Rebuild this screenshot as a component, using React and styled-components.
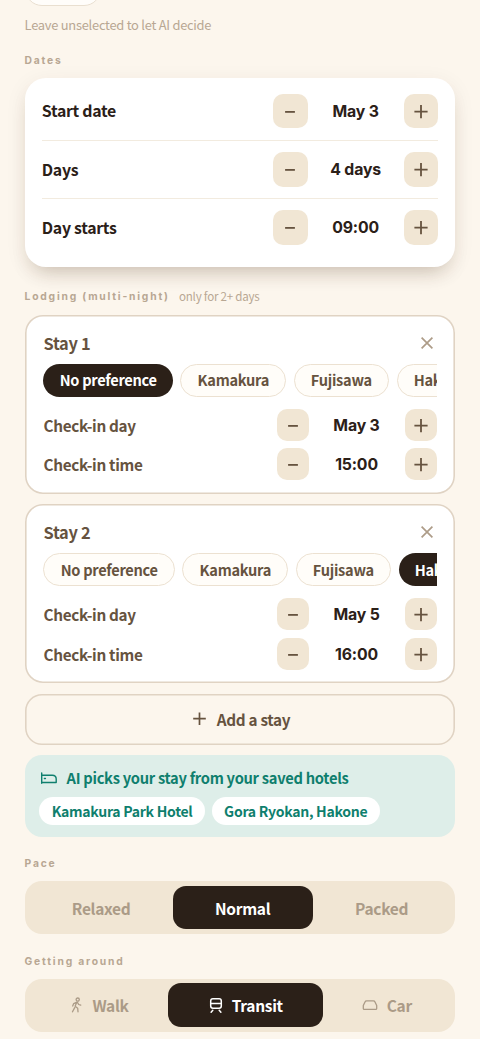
import React from "react";
import styled, { createGlobalStyle, css } from "styled-components";

const ink = "#2b2018";
const brown = "#66533f";
const sand = "#f1e6d4";
const muted = "#b8a793";
const teal = "#0f7f6e";

const sans = `"Noto Sans CJK JP", "Noto Sans", sans-serif`;
const grotesk = `Inter, "Liberation Sans", sans-serif`;
const tight = "-0.02em";

const GlobalStyle = createGlobalStyle`
  * { box-sizing: border-box; }
  body { margin: 0; background: #fcf6ed; font-family: ${sans}; color: ${ink}; }
  button { font: inherit; color: inherit; border: 0; padding: 0; margin: 0; background: none; }
`;

const Screen = styled.main`
  width: 480px;
  height: 1039px;
  overflow: hidden;
  padding: 0 24.6px;
  display: flex;
  flex-direction: column;
  & > * { flex-shrink: 0; }
`;

const CutChip = styled.div`
  width: 74px;
  height: 6px;
  overflow: hidden;
  display: flex;
  align-items: flex-end;
  &::after {
    content: "";
    flex: none;
    width: 74px;
    height: 34px;
    border: 1.5px solid #e9dfd0;
    border-radius: 17px;
    background: #fffdfa;
  }
`;

const Hint = styled.p`
  margin: 9px 0 0;
  height: 21px;
  line-height: 20px;
  font-size: 12.9px;
  letter-spacing: -0.02em;
  color: ${muted};
`;

const Label = styled.h2`
  margin: ${(p) => p.$top}px 0 0;
  height: 16px;
  line-height: 16px;
  padding-top: 0.8px;
  font-family: ${grotesk};
  font-size: 10.3px;
  font-weight: 700;
  letter-spacing: 1.8px;
  color: ${muted};
  display: flex;
  align-items: center;
`;

const LabelNote = styled.span`
  margin-left: 9.4px;
  font-family: ${sans};
  font-size: 11.6px;
  line-height: 14px;
  margin-bottom: 1px;
  font-weight: 400;
  letter-spacing: -0.022em;
`;

const DatesCard = styled.section`
  margin-top: 10px;
  height: 189.4px;
  padding: 4.3px 17.2px 0;
  border-radius: 21px;
  background: #fff;
  box-shadow: 0 12px 20px -9px rgba(70, 45, 20, 0.25), 0 5px 22px rgba(70, 45, 20, 0.07);
`;

const DateRow = styled.div`
  height: 57.8px;
  display: flex;
  align-items: center;
  justify-content: space-between;
  font-size: 15.9px;
  line-height: 23.4px;
  font-weight: 700;
  letter-spacing: ${tight};
  & + & { border-top: 1.5px solid #f2ebdf; }
`;

const Stepper = styled.div`
  display: flex;
  align-items: center;
`;

const StepButton = styled.button`
  width: ${(p) => p.$size}px;
  height: ${(p) => p.$size}px;
  border-radius: 10px;
  background: ${sand};
  color: ${brown};
  display: grid;
  place-items: center;
`;

const StepValue = styled.span`
  width: 96px;
  text-align: center;
  font-family: ${grotesk};
  font-size: 15.8px;
  line-height: 20px;
  padding-top: 2px;
  font-weight: 700;
  letter-spacing: -0.15px;
  color: ${ink};
`;

const StayCard = styled.section`
  margin-top: ${(p) => p.$top}px;
  height: 179px;
  padding: 14.7px 18.9px 0;
  box-shadow: inset 0 0 0 1.6px #e0d3c3;
  border-radius: 18px;
  background: #fff;
`;

const StayHead = styled.div`
  height: 26px;
  display: flex;
  align-items: center;
  justify-content: space-between;
  font-size: 16.4px;
  line-height: 24px;
  font-weight: 700;
  letter-spacing: ${tight};
  color: ${brown};
  svg { margin-right: 3.4px; color: #ad9c88; }
`;

const ChipStrip = styled.div`
  margin-top: 8px;
  margin-bottom: 12px;
  display: flex;
  gap: 7.5px;
  overflow: hidden;
`;

const Chip = styled.button`
  flex: none;
  height: 33px;
  padding: 0 16.2px;
  border-radius: 17px;
  font-size: 14.6px;
  line-height: 20px;
  font-weight: 700;
  letter-spacing: ${tight};
  white-space: nowrap;
  ${(p) =>
    p.$on
      ? css`background: ${ink}; color: #fff;`
      : css`background: #fffdf9; color: ${brown}; border: 1.5px solid #ece1d1;`}
`;

const StayRow = styled.div`
  height: 32px;
  margin-bottom: 7.4px;
  display: flex;
  align-items: center;
  justify-content: space-between;
  font-size: 15.3px;
  line-height: 22px;
  font-weight: 700;
  letter-spacing: ${tight};
  color: ${brown};
`;

const AddButton = styled.button`
  margin-top: 10.5px;
  height: 51px;
  box-shadow: inset 0 0 0 1.6px #e0d3c3;
  border-radius: 17px;
  display: flex;
  align-items: center;
  justify-content: center;
  gap: 11px;
  padding: 0 0 0 3px;
  font-size: 15.3px;
  line-height: 22px;
  font-weight: 700;
  letter-spacing: ${tight};
  color: ${brown};
`;

const Picks = styled.section`
  margin-top: 10px;
  height: 82px;
  padding: 12px 14.8px 0;
  border-radius: 17px;
  background: #deeee9;
  color: ${teal};
  font-weight: 700;
  letter-spacing: -0.018em;
`;

const PicksHead = styled.div`
  height: 22px;
  display: flex;
  align-items: center;
  gap: 8.6px;
  padding-left: 0.6px;
  font-size: 14.7px;
  line-height: 20px;
`;

const PicksList = styled.div`
  margin-top: 8px;
  display: flex;
  gap: 7px;
`;

const Hotel = styled.span`
  height: 28px;
  line-height: 28px;
  padding: 0 12.3px;
  border-radius: 14px;
  background: #fff;
  font-size: 14.05px;
`;

const Segments = styled.div`
  margin-top: 10px;
  height: 53.3px;
  padding: 4.9px;
  border-radius: 17px;
  background: ${sand};
  display: grid;
  grid-template-columns: ${(p) => p.$columns};
`;

const Segment = styled.button`
  border-radius: 13px;
  display: flex;
  align-items: center;
  justify-content: center;
  gap: 9px;
  font-size: 15.5px;
  line-height: 22px;
  font-weight: 700;
  letter-spacing: ${tight};
  color: ${(p) => (p.$on ? "#fff" : "#ab9b87")};
  background: ${(p) => (p.$on ? ink : "transparent")};
`;

const Icon = ({ w = 16, h = 16, sw = 1.5, children }) => (
  <svg
    width={w}
    height={h}
    viewBox={`0 0 ${w} ${h}`}
    fill="none"
    stroke="currentColor"
    strokeWidth={sw}
    strokeLinecap="round"
    strokeLinejoin="round"
  >
    {children}
  </svg>
);

const Minus = () => (
  <Icon sw={1.8}><path d="M3.1 8.9h9.8" strokeLinecap="butt" /></Icon>
);
const Plus = () => (
  <Icon sw={1.8}><path d="M8 2.1v13.2M1.4 8.7h13.2" strokeLinecap="butt" /></Icon>
);
const PlusSmall = () => (
  <Icon w={13} h={14} sw={1.7}><path d="M6.5 .4v12.6M.2 6.7h12.6" strokeLinecap="butt" /></Icon>
);
const Close = () => (
  <Icon w={12} h={12} sw={1.7}><path d="M.6 .6l10.8 10.8M11.4 .6L.6 11.4" strokeLinecap="butt" /></Icon>
);
const Bed = () => (
  <Icon w={18} h={14} sw={1.4}>
    <path d="M1.7 2v10.3M1.7 4.3h10.6c2.4 0 3.9 1.6 3.9 3.8v3.4H1.7" />
    <path d="M4.4 7.5h1" />
  </Icon>
);
const Walker = () => (
  <Icon w={14} h={16} sw={1.3}>
    <circle cx="8.7" cy="2.6" r="1.6" />
    <path d="M7.9 5.1L6.1 9.3l2.6 1.9.3 3.6M5.7 10.6l-2.2 4.2M7.9 5.1L4.7 6.6 3.7 9M8.4 5.3l1.3 2.2 2 .7" />
  </Icon>
);
const Train = () => (
  <Icon w={14} h={17} sw={1.5}>
    <rect x="1.7" y="1.7" width="10.6" height="9.6" rx="2.2" />
    <path d="M1.7 6.4h10.6M3.8 13.2l-1.7 2M10.2 13.2l1.7 2" />
  </Icon>
);
const Car = () => (
  <Icon w={16} h={12} sw={1.3}>
    <path d="M1.3 9.4V6.6L3 2.9Q3.5 1.8 4.6 1.8h6.8q1.1 0 1.6 1.1l1.7 3.7v2.8q0 1-1 1H2.3q-1 0-1-1z" />
  </Icon>
);

const Step = ({ size, value }) => (
  <Stepper>
    <StepButton $size={size} aria-label="Decrease"><Minus /></StepButton>
    <StepValue>{value}</StepValue>
    <StepButton $size={size} aria-label="Increase"><Plus /></StepButton>
  </Stepper>
);

const areas = ["No preference", "Kamakura", "Fujisawa", "Hakone"];

const Stay = ({ n, top, selected, day, time }) => (
  <StayCard $top={top}>
    <StayHead>Stay {n}<Close /></StayHead>
    <ChipStrip>
      {areas.map((a) => <Chip key={a} $on={a === selected}>{a}</Chip>)}
    </ChipStrip>
    <StayRow>Check-in day<Step size={32} value={day} /></StayRow>
    <StayRow>Check-in time<Step size={32} value={time} /></StayRow>
  </StayCard>
);

export default function App() {
  return (
    <>
      <GlobalStyle />
      <Screen>
        <CutChip />
        <Hint>Leave unselected to let AI decide</Hint>
        <Label $top={16}>Dates</Label>
        <DatesCard>
          <DateRow>Start date<Step size={34.6} value="May 3" /></DateRow>
          <DateRow>Days<Step size={34.6} value="4 days" /></DateRow>
          <DateRow>Day starts<Step size={34.6} value="09:00" /></DateRow>
        </DatesCard>
        <Label $top={20.6}>Lodging (multi-night)<LabelNote>only for 2+ days</LabelNote></Label>
        <Stay n={1} top={11} selected="No preference" day="May 3" time="15:00" />
        <Stay n={2} top={10.5} selected="Hakone" day="May 5" time="16:00" />
        <AddButton><PlusSmall />Add a stay</AddButton>
        <Picks>
          <PicksHead><Bed />AI picks your stay from your saved hotels</PicksHead>
          <PicksList>
            <Hotel>Kamakura Park Hotel</Hotel>
            <Hotel>Gora Ryokan, Hakone</Hotel>
          </PicksList>
        </Picks>
        <Label $top={18}>Pace</Label>
        <Segments $columns="143.2px 140px 1fr">
          <Segment>Relaxed</Segment>
          <Segment $on>Normal</Segment>
          <Segment>Packed</Segment>
        </Segments>
        <Label $top={18.3}>Getting around</Label>
        <Segments $columns="139px 154.6px 1fr">
          <Segment><Walker />Walk</Segment>
          <Segment $on><Train />Transit</Segment>
          <Segment><Car />Car</Segment>
        </Segments>
      </Screen>
    </>
  );
}
